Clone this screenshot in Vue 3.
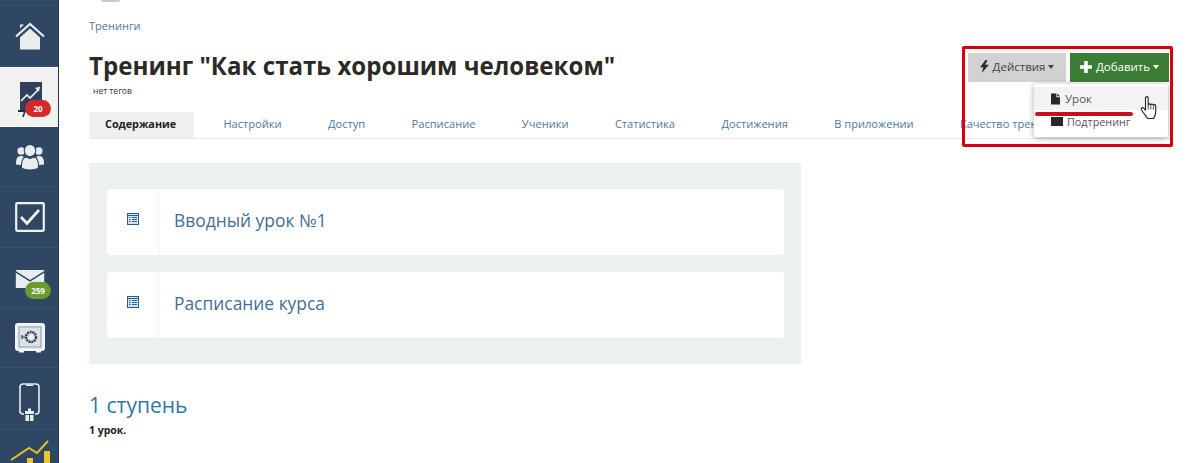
<script setup>
const tabs = ['Настройки', 'Доступ', 'Расписание', 'Ученики', 'Статистика', 'Достижения', 'В приложении', 'Качество тренинга']
const lessons = ['Вводный урок №1', 'Расписание курса']
</script>

<template>
  <div class="page">
    <aside class="sidebar">
      <div class="cap"></div>
      <a class="item tall">
        <svg width="30" height="28" viewBox="0 0 30 28">
          <path d="M5 15.500 15 6.500l10 9V27.500H5z" fill="#e9edee"/>
          <path d="M1 14.500 15 2l14 12.500" fill="none" stroke="#e9edee" stroke-width="2.200"/>
          <path d="M5 2.500h4L5 6.500z" fill="#e9edee"/>
        </svg>
      </a>
      <a class="item active">
        <svg class="trend" width="26" height="36" viewBox="0 0 26 36">
          <rect x="2" y="1" width="22" height="28" fill="#2f4058"/>
          <path d="M0 30h20" stroke="#222d3d" stroke-width="2"/>
          <path d="M7 30l-2 6" stroke="#222d3d" stroke-width="1.600"/>
          <path d="M3 20l6-6 3 3 8-8" fill="none" stroke="#eef2f3" stroke-width="1.700"/>
          <path d="M17 7l5-1.500-1 5z" fill="#eef2f3"/>
        </svg>
        <span class="badge red">20</span>
      </a>
      <a class="item">
        <svg width="30" height="26" viewBox="0 0 32 28">
          <g fill="#e9edee">
            <circle cx="6.500" cy="7.500" r="4"/>
            <circle cx="25.500" cy="7.500" r="4"/>
            <path d="M1 22c-.4-6 1.500-9 5-9 1.500 0 2.500.5 3 1l-1 9z"/>
            <path d="M31 22c.4-6-1.500-9-5-9-1.500 0-2.500.5-3 1l1 9z"/>
          </g>
          <g fill="#e9edee" stroke="#2f4762" stroke-width="1.200">
            <ellipse cx="16" cy="7" rx="6.200" ry="6.500"/>
            <path d="M7 26c-.8-7 1.500-12 5-12 1.500 1 2.500 1.500 4 1.500s2.500-.5 4-1.500c3.500 0 5.800 5 5 12-2 1.300-5.500 2-9 2s-7-.7-9-2z"/>
          </g>
        </svg>
      </a>
      <a class="item tall">
        <svg width="30" height="30" viewBox="0 0 30 30">
          <rect x="1.200" y="1.200" width="27.600" height="27.600" rx="1" fill="none" stroke="#eef2f3" stroke-width="2.200"/>
          <path d="M6 15l6 6.500L24 8" fill="none" stroke="#eef2f3" stroke-width="2.800"/>
        </svg>
      </a>
      <a class="item">
        <svg class="mail" width="30" height="18" viewBox="0 0 30 19">
          <path d="M0 0h30v1L15 10.500 0 1z" fill="#e9edee"/>
          <path d="M0 3l15 9.500L30 3v16H0z" fill="#e9edee"/>
        </svg>
        <span class="badge green">259</span>
      </a>
      <a class="item">
        <svg width="30" height="30" viewBox="0 0 30 30">
          <rect x="1" y="1" width="28" height="26" rx="2" fill="#e6ebed" stroke="#f4f6f7" stroke-width="2"/>
          <rect x="4" y="4" width="22" height="20" fill="#dbe1e5" stroke="#5d6f82" stroke-width=".6"/>
          <path d="M4 27h5v2.500H4zM21 27h5v2.500h-5z" fill="#f4f6f7"/>
          <circle cx="16" cy="14" r="5" fill="none" stroke="#2f4058" stroke-width="2.400" stroke-dasharray="2 .7"/>
          <circle cx="16" cy="14" r="2" fill="#f4f6f7"/>
          <path d="M7 14h3M7 12v4" stroke="#2f4058" stroke-width="1.200"/>
        </svg>
      </a>
      <a class="item taller">
        <svg class="phone" width="24" height="40" viewBox="0 0 24 40">
          <rect x="2" y="1" width="19" height="30" rx="3" fill="none" stroke="#e9edee" stroke-width="1.600"/>
          <path d="M8 1.500h7v1.500H8z" fill="#e9edee"/>
          <path d="M6 25h11v13H6z" fill="#2f4762"/>
          <path d="M7 28h9v3H7zM7.500 32H11v6H7.500zM12 32h3.500v6H12zM10 25.500h3V28h-3z" fill="#e9edee"/>
        </svg>
      </a>
      <a class="item last">
        <svg width="40" height="25" viewBox="0 0 40 25">
          <path d="M1 20 19 8l8 5L38 1" fill="none" stroke="#e8bf2c" stroke-width="2"/>
          <path d="M17 18h6v7h-6zM34 11h6v14h-6z" fill="#f0c52a"/>
        </svg>
      </a>
    </aside>

    <main class="main">
      <div class="logo-bit"></div>
      <a class="crumb">Тренинги</a>
      <header class="head">
        <div>
          <h1>Тренинг "Как стать хорошим человеком"</h1>
          <div class="tags">нет тегов</div>
        </div>
        <div class="actions">
          <button class="btn gray">
            <svg width="9" height="13" viewBox="0 0 9 13"><path d="M5.500 0 0 7.200h3.300L1.700 13 9 4.800H5.200L7.500 0z" fill="#2c2c2c"/></svg>
            Действия<i class="caret"></i>
          </button>
          <button class="btn green">
            <svg width="12" height="12" viewBox="0 0 12 12"><path d="M4.200 0h3.600v4.200H12v3.600H7.800V12H4.200V7.800H0V4.200h4.200z" fill="#fff"/></svg>
            Добавить<i class="caret"></i>
          </button>
          <div class="menu">
            <div class="menu-item hover">
              <svg width="9" height="12" viewBox="0 0 10 12"><path d="M0 0h6v4h4v8H0zM7 0l3 3H7z" fill="#25272b"/></svg>
              Урок
            </div>
            <div class="menu-item sub">
              <span class="box"></span>
              Подтренинг
            </div>
          </div>
        </div>
      </header>

      <nav class="tabs">
        <a class="tab current">Содержание</a>
        <a v-for="t in tabs" :key="t" class="tab">{{ t }}</a>
      </nav>

      <section class="panel">
        <div v-for="l in lessons" :key="l" class="card">
          <div class="ico">
            <svg width="12" height="12" viewBox="0 0 12 12">
              <rect x=".5" y=".5" width="11" height="11" fill="#d3e2ec" stroke="#1f618c"/>
              <path d="M1 2.500h10" stroke="#1f618c"/>
              <path d="M2 4.500h1.500M5 4.500h5M2 6.500h1.500M5 6.500h5M2 8.500h1.500M5 8.500h5" stroke="#2b6a94"/>
            </svg>
          </div>
          <a class="title">{{ l }}</a>
        </div>
      </section>

      <h2 class="step">1 ступень</h2>
      <div class="count">1 урок.</div>
    </main>

    <div class="frame"></div>
    <div class="underline"></div>
    <svg class="cursor" width="19" height="25" viewBox="0 0 19 25">
      <path d="M5.500 2c0-1.800 2.700-1.800 2.700 0v7c.2-1.500 2.500-1.500 2.600 0 .2-1.200 2.400-1.200 2.500.3.300-1 2.300-1 2.400.5V16c0 3-1.200 4.500-2 6.500H7.500C6 20 3.500 17 1.500 14c-1-1.700.8-3 2.200-1.800l1.800 2z" fill="#fff" stroke="#222" stroke-width="1.100" stroke-linejoin="round"/>
      <path d="M8.200 9v4.500M10.800 9.500v4M13.300 10v3.500" stroke="#222" stroke-width=".8"/>
    </svg>
  </div>
</template>

<style>
html, body { margin: 0; background: #fff; }
</style>

<style scoped>
.page {
  position: relative;
  display: flex;
  width: 1200px;
  height: 463px;
  overflow: hidden;
  font-family: "Open Sans", "Noto Sans", sans-serif;
  color: #2b2b2b;
}
.sidebar {
  flex: none;
  display: flex;
  flex-direction: column;
  width: 58px;
  height: 463px;
  overflow: hidden;
  background: #2f4762;
  border-right: 1px solid #26394f;
}
.cap { flex: none; height: 5px; border-bottom: 1px solid #3a506a; }
.item {
  position: relative;
  flex: none;
  display: flex;
  align-items: center;
  justify-content: center;
  height: 59px;
  padding-left: 2px;
  border-bottom: 1px solid #3a506a;
}
.item.tall { height: 60px; }
.item.taller { height: 61px; }
.item.active {
  height: 58px;
  background: #f1f1f1;
  border-top: 1px solid #fff;
  border-bottom: 1px solid #fff;
  margin-right: -1px;
}
.item.last { align-items: flex-start; padding-top: 10px; border-bottom: 0; }
.trend { margin-top: 4px; }
.mail { margin-top: 2px; }
.phone { margin-top: 8px; }
.badge {
  position: absolute;
  left: 25px;
  width: 26px;
  height: 17px;
  border-radius: 9px;
  color: #fff;
  font: 700 8px/17px "Open Sans", sans-serif;
  text-align: center;
}
.badge.red { top: 32px; background: #d32a2a; }
.badge.green { top: 34px; background: #6b9b2e; }

.main {
  position: relative;
  flex: none;
  box-sizing: border-box;
  width: 1110px;
  padding: 0 0 0 30px;
}
.logo-bit {
  position: absolute;
  left: 42px;
  top: 0;
  width: 19px;
  height: 2px;
  background: #c9cccf;
  border-radius: 0 0 6px 6px;
}
.crumb {
  display: block;
  padding-top: 18px;
  font-size: 11px;
  line-height: 15px;
  color: #4d7a9a;
}
.head {
  display: flex;
  justify-content: space-between;
  margin-top: 14px;
  height: 65px;
}
h1 {
  margin: 0;
  font-size: 24.100px;
  line-height: 38px;
  font-weight: 700;
  color: #2d2a26;
  white-space: nowrap;
}
.tags {
  margin: 1px 0 0 4px;
  font-size: 8.500px;
  line-height: 10px;
  color: #333;
}
.actions {
  position: relative;
  display: flex;
  gap: 4px;
  margin-top: 6px;
  height: 29px;
}
.btn {
  display: flex;
  align-items: center;
  justify-content: center;
  gap: 4px;
  width: 99px;
  height: 29px;
  padding: 0 0 2px;
  border: 0;
  font: 400 11.500px "Open Sans", sans-serif;
}
.btn.gray { background: #d2d2d2; color: #444; width: 98px; }
.btn.green { background: #3c7d36; color: #fff; }
.caret {
  width: 0;
  height: 0;
  margin-left: -1px;
  border-top: 4px solid currentColor;
  border-left: 3.500px solid transparent;
  border-right: 3.500px solid transparent;
}
.menu {
  position: absolute;
  right: 1px;
  top: 31px;
  z-index: 2;
  width: 134px;
  height: 53px;
  padding-top: 3px;
  box-sizing: border-box;
  background: #fff;
  border-radius: 3px;
  box-shadow: 0 1px 6px rgba(0, 0, 0, .35);
}
.menu-item {
  display: flex;
  align-items: center;
  gap: 5px;
  height: 23px;
  padding-left: 17px;
  font-size: 11.500px;
  color: #555;
}
.menu-item.sub { font-size: 10.800px; gap: 4px; }
.menu-item.hover { background: #f3f3f3; height: 23px; }
.box { width: 12px; height: 9px; background: #26282c; }

.tabs {
  display: flex;
  align-items: stretch;
  width: 1081px;
  height: 26px;
  border-bottom: 1px solid #e9e9e9;
  white-space: nowrap;
}
.tab {
  padding: 0 23.200px;
  font-size: 11.100px;
  line-height: 24px;
  color: #4d7a9a;
}
.tab.current {
  margin-right: 6px;
  padding: 0 18px 0 16px;
  background: #efefef;
  font-size: 10.800px;
  font-weight: 700;
  color: #222;
}
.panel {
  display: flex;
  flex-direction: column;
  gap: 17px;
  width: 712px;
  box-sizing: border-box;
  margin-top: 24px;
  padding: 26px 17px 26px 18px;
  background: #edf0f1;
}
.card {
  display: flex;
  align-items: stretch;
  height: 66px;
  background: #fff;
  border-radius: 4px;
}
.ico {
  display: flex;
  justify-content: center;
  align-items: flex-start;
  padding-top: 24px;
  box-sizing: border-box;
  width: 52px;
  border-right: 1px solid #edf0f1;
}
.title {
  padding-left: 15px;
  font-size: 17.400px;
  line-height: 62px;
  color: #3f6f94;
}
.step {
  margin: 26px 0 0;
  font-size: 21px;
  line-height: 30px;
  font-weight: 400;
  color: #2e78a8;
}
.count {
  margin-top: 3px;
  font-size: 10.500px;
  line-height: 14px;
  font-weight: 700;
  color: #222;
}
.frame {
  position: absolute;
  left: 962px;
  top: 46px;
  width: 205px;
  height: 95px;
  border: 3.500px solid #d7000f;
  border-radius: 2px;
  z-index: 3;
}
.underline {
  position: absolute;
  left: 1035px;
  top: 112px;
  width: 98px;
  height: 3.500px;
  background: #cc0d1b;
  border-radius: 2px;
  z-index: 3;
}
.cursor {
  position: absolute;
  left: 1140px;
  top: 96px;
  z-index: 3;
}
</style>
